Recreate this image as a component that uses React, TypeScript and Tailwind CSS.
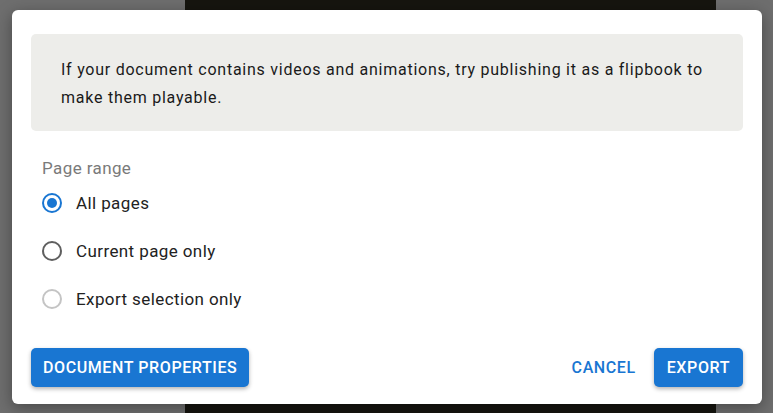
const Radio = ({ state, label }: { state: "checked" | "unchecked" | "disabled"; label: string }) => {
  const ring =
    state === "checked" ? "border-[#1976d2]" : state === "unchecked" ? "border-[#5f5f5f]" : "border-[#c4c4c4]";
  return (
    <div className="flex h-[48px] items-center">
      <div className={`ml-[11px] flex h-[20px] w-[20px] items-center justify-center rounded-full border-2 ${ring}`}>
        {state === "checked" && <div className="h-[10px] w-[10px] rounded-full bg-[#1976d2]" />}
      </div>
      <span className="ml-[14px] text-[17px] leading-[24px] tracking-[0.4px] text-[#222]">{label}</span>
    </div>
  );
};

export default function App() {
  return (
    <div
      className="relative h-[413px] w-[773px] overflow-hidden bg-[#6e6e6e]"
      style={{ fontFamily: "Roboto, 'Liberation Sans', sans-serif" }}
    >
      <div className="absolute left-[185px] top-0 h-full w-[531px] bg-[#16150f]" />

      <div className="absolute left-[12px] top-[10px] flex h-[394px] w-[750px] flex-col rounded-[6px] bg-white px-[19px] pb-[17px] pt-[24px] shadow-[0_4px_16px_rgba(0,0,0,0.35)]">
        <div className="rounded-[5px] bg-[#ededea] pb-[19px] pl-[30px] pr-[20px] pt-[22px] text-[16px] leading-[28px] tracking-[0.75px] text-[#1a1a1a]">
          If your document contains videos and animations, try publishing it as a flipbook to make them playable.
        </div>

        <div className="ml-[11px] mt-[25px] text-[17px] leading-[24px] tracking-[0.4px] text-[#7a7a7a]">Page range</div>
        <div className="-mt-[1px] flex flex-col">
          <Radio state="checked" label="All pages" />
          <Radio state="unchecked" label="Current page only" />
          <Radio state="disabled" label="Export selection only" />
        </div>

        <div className="mt-auto flex items-center justify-between">
          <button className="h-[39px] rounded-[5px] bg-[#1976d2] px-[12px] text-[16px] font-medium uppercase tracking-[0.6px] text-white shadow-[0_2px_4px_rgba(0,0,0,0.3)]">
            Document properties
          </button>
          <div className="flex items-center gap-[10px]">
            <button className="h-[39px] px-[8px] text-[16px] font-medium uppercase tracking-[0.6px] text-[#1976d2]">
              Cancel
            </button>
            <button className="h-[39px] rounded-[5px] bg-[#1976d2] px-[13px] text-[16px] font-medium uppercase tracking-[0.6px] text-white shadow-[0_2px_4px_rgba(0,0,0,0.3)]">
              Export
            </button>
          </div>
        </div>
      </div>
    </div>
  );
}
